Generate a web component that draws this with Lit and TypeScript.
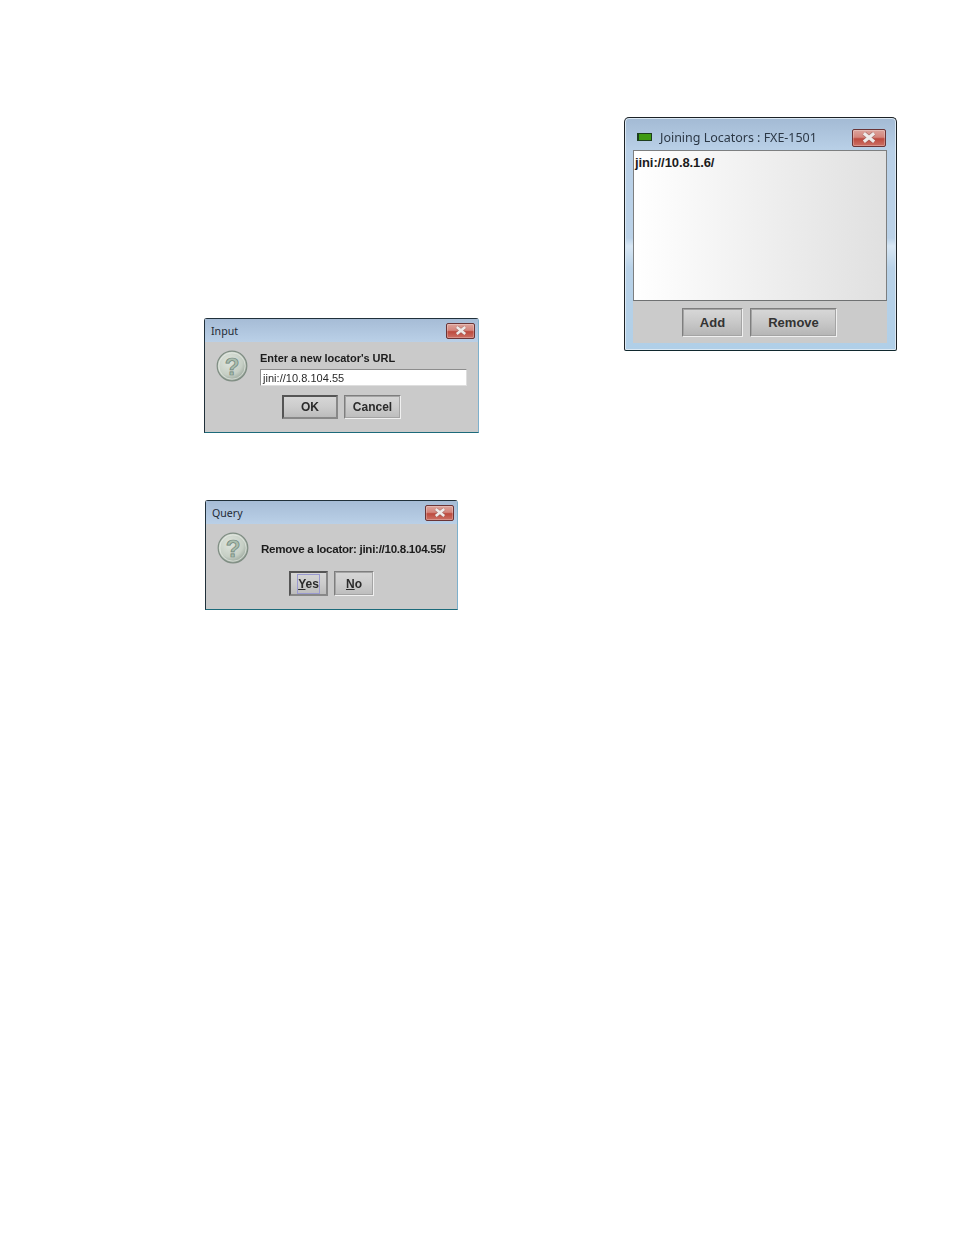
import { LitElement, html, css } from "lit";
import { customElement } from "lit/decorators.js";

let gid = 0;
const helpIcon = () => {
  const id = "q" + gid++;
  return html`<svg class="help" viewBox="0 0 32 32" aria-hidden="true">
    <defs>
      <radialGradient id=${id} cx="0.4" cy="0.35" r="0.75">
        <stop offset="0" stop-color="#dfe5dd" />
        <stop offset="0.6" stop-color="#c6cfc5" />
        <stop offset="1" stop-color="#87968a" />
      </radialGradient>
    </defs>
    <circle cx="16" cy="16" r="14.8" fill=${`url(#${id})`} stroke="#7f8d83" stroke-width="1.2" />
    <circle cx="16" cy="16" r="13.2" fill="none" stroke="#eef1ec" stroke-width="1" opacity="0.6" />
    <text x="16" y="24.5" text-anchor="middle" class="qmark">?</text>
  </svg>`;
};

const closeBtn = () => html`<div class="close">
  <svg viewBox="0 0 14 9" aria-hidden="true">
    <path d="M2.8 1 L11.2 8 M11.2 1 L2.8 8" stroke="#8d5a58" stroke-width="3.8" fill="none" opacity="0.55" />
    <path d="M2.8 1 L11.2 8 M11.2 1 L2.8 8" stroke="#eeeae9" stroke-width="2.6" fill="none" />
  </svg>
</div>`;

@customElement("app-root")
export class AppRoot extends LitElement {
  static styles = css`
    :host {
      display: block;
      position: relative;
      width: 954px;
      height: 1235px;
      background: #fff;
      font-family: "Liberation Sans", Arial, sans-serif;
      overflow: hidden;
    }
    .win {
      position: absolute;
      box-sizing: border-box;
      display: flex;
      flex-direction: column;
      filter: blur(0.3px);
    }

    /* Joining Locators window */
    .joining {
      left: 624px;
      top: 117px;
      width: 273px;
      height: 234px;
      border: 1px solid #1c2226;
      border-bottom-color: #10282e;
      border-radius: 5px 5px 2px 2px;
      padding: 0 9px 7px 8px;
      background: linear-gradient(
        180deg,
        #a3bad4 0,
        #b9d0e7 32px,
        #bbd2e8 120px,
        #d8e7f4 128px,
        #b9d2e8 150px,
        #b0cfe8 100%
      );
      box-shadow: inset 0 0 0 1px #dbe8f3;
    }
    .joining .bar {
      height: 32px;
      box-sizing: border-box;
      padding: 8px 1px 0 4px;
      display: flex;
      align-items: center;
      gap: 8px;
    }
    .led {
      width: 15px;
      height: 8px;
      box-sizing: border-box;
      background: #3f9a12;
      border: 1px solid #1c3d1c;
      border-left-width: 2px;
      margin-top: -3px;
    }
    .joining .title {
      font: 12.5px/16px "Noto Sans", sans-serif;
      color: #2c3846;
      flex: 1;
      letter-spacing: -0.02px;
    }
    .joining .close {
      width: 34px;
      height: 18px;
      margin-top: -1px;
    }
    .joining .close svg {
      width: 18px;
      height: 11px;
    }
    .list {
      height: 151px;
      box-sizing: border-box;
      border: 1px solid #7d7f80;
      border-bottom-color: #6f7172;
      background: linear-gradient(90deg, #fff 0, #f1f1f1 45%, #e0e0e0 100%);
      font: bold 13px/24px "Liberation Sans", sans-serif;
      color: #1c1c1c;
      padding-left: 1px;
      letter-spacing: -0.1px;
    }
    .actions {
      flex: 1;
      background: #cbcbcb;
      display: flex;
      justify-content: center;
      gap: 7px;
      padding-top: 7px;
      padding-right: 1px;
      box-sizing: border-box;
    }
    .joining .btn {
      height: 29px;
      font-size: 13px;
      color: #333;
      background: linear-gradient(180deg, #d8d8d8 0, #c8c8c8 50%, #b4b4b4 100%);
    }
    .add {
      width: 61px;
    }
    .remove {
      width: 87px;
    }

    /* Shared dialog chrome */
    .dialog {
      border: 1px solid #20303a;
      border-bottom-color: #1c6a7a;
      border-right-color: #7eb0cc;
      border-radius: 3px 3px 0 0;
      background: #cacaca;
    }
    .dialog .bar {
      height: 23px;
      flex: none;
      display: flex;
      align-items: center;
      justify-content: space-between;
      padding: 0 3px 0 6px;
      background: linear-gradient(180deg, #a6bcd6 0, #bad0e7 100%);
    }
    .dialog .title {
      font: 10.6px/14px "Noto Sans", sans-serif;
      color: #1f2a36;
    }
    .close {
      box-sizing: border-box;
      display: flex;
      align-items: center;
      justify-content: center;
      border: 1px solid #6a3436;
      border-radius: 2px;
      background: linear-gradient(180deg, #dca49c 0, #d4857c 45%, #bd4a3e 55%, #cc7166 100%);
      box-shadow: inset 0 0 0 1px rgba(255, 255, 255, 0.25);
    }
    .dialog .close {
      width: 29px;
      height: 16px;
    }
    .dialog .close svg {
      width: 14px;
      height: 9px;
    }
    .help {
      width: 32px;
      height: 32px;
      flex: none;
    }
    .qmark {
      font: bold 24px "Liberation Sans", sans-serif;
      fill: #a9bdae;
      stroke: #6f8479;
      stroke-width: 0.7px;
    }
    .btn {
      box-sizing: border-box;
      display: flex;
      align-items: center;
      justify-content: center;
      font: bold 12px/14px "Liberation Sans", sans-serif;
      color: #2b2b2b;
      border: 1px solid #7e7e7e;
      border-right-color: #f0f0f0;
      border-bottom-color: #f0f0f0;
      outline: 1px solid #a4a4a4;
      outline-offset: -2px;
      background: linear-gradient(180deg, #d6d6d6 0, #cccccc 50%, #bcbcbc 100%);
    }
    .btn.default {
      border: 2px solid #555;
      border-right-color: #888;
      border-bottom-color: #888;
      outline: none;
    }
    u {
      text-decoration-thickness: 1px;
      text-underline-offset: 1px;
    }

    /* Input dialog */
    .input {
      left: 204px;
      top: 318px;
      width: 275px;
      height: 115px;
    }
    .input .content {
      display: grid;
      grid-template-columns: 32px 207px;
      column-gap: 12px;
      padding: 8px 0 0 11px;
    }
    .input .fields {
      display: flex;
      flex-direction: column;
    }
    .label {
      font: bold 11px/14px "Liberation Sans", sans-serif;
      color: #1c1c1c;
    }
    .input .label {
      padding-top: 1px;
      height: 19px;
      box-sizing: border-box;
      letter-spacing: -0.03px;
    }
    .field {
      box-sizing: border-box;
      height: 17px;
      border: 1px solid #8d8d8d;
      border-right-color: #dedede;
      border-bottom-color: #dedede;
      background: #fff;
      font: 11px/17px "Liberation Sans", sans-serif;
      letter-spacing: 0.03px;
      color: #2a2a2a;
      padding-left: 2px;
    }
    .input .row {
      display: flex;
      gap: 6px;
      margin-top: 9px;
      margin-left: 77px;
    }
    .ok {
      width: 56px;
      height: 24px;
    }
    .cancel {
      width: 57px;
      height: 24px;
    }

    /* Query dialog */
    .query {
      left: 205px;
      top: 500px;
      width: 253px;
      height: 110px;
    }
    .query .content {
      display: flex;
      align-items: center;
      gap: 12px;
      padding: 8px 0 0 11px;
    }
    .query .label {
      font-size: 11.6px;
      letter-spacing: -0.29px;
      white-space: nowrap;
      padding-top: 2px;
    }
    .query .row {
      display: flex;
      gap: 6px;
      margin-top: 7px;
      margin-left: 83px;
    }
    .yes {
      width: 39px;
      height: 25px;
    }
    .yes span {
      outline: 1px solid #9a9ad0;
      padding: 2px 0;
    }
    .no {
      width: 40px;
      height: 25px;
    }
  `;

  render() {
    return html`
      <section class="win joining">
        <div class="bar">
          <div class="led"></div>
          <div class="title">Joining Locators : FXE-1501</div>
          ${closeBtn()}
        </div>
        <div class="list">jini://10.8.1.6/</div>
        <div class="actions">
          <div class="btn add">Add</div>
          <div class="btn remove">Remove</div>
        </div>
      </section>

      <section class="win dialog input">
        <div class="bar">
          <div class="title">Input</div>
          ${closeBtn()}
        </div>
        <div class="content">
          ${helpIcon()}
          <div class="fields">
            <div class="label">Enter a new locator's URL</div>
            <div class="field">jini://10.8.104.55</div>
          </div>
        </div>
        <div class="row">
          <div class="btn default ok">OK</div>
          <div class="btn cancel">Cancel</div>
        </div>
      </section>

      <section class="win dialog query">
        <div class="bar">
          <div class="title">Query</div>
          ${closeBtn()}
        </div>
        <div class="content">
          ${helpIcon()}
          <div class="label">Remove a locator: jini://10.8.104.55/</div>
        </div>
        <div class="row">
          <div class="btn default yes"><span><u>Y</u>es</span></div>
          <div class="btn no"><span><u>N</u>o</span></div>
        </div>
      </section>
    `;
  }
}
